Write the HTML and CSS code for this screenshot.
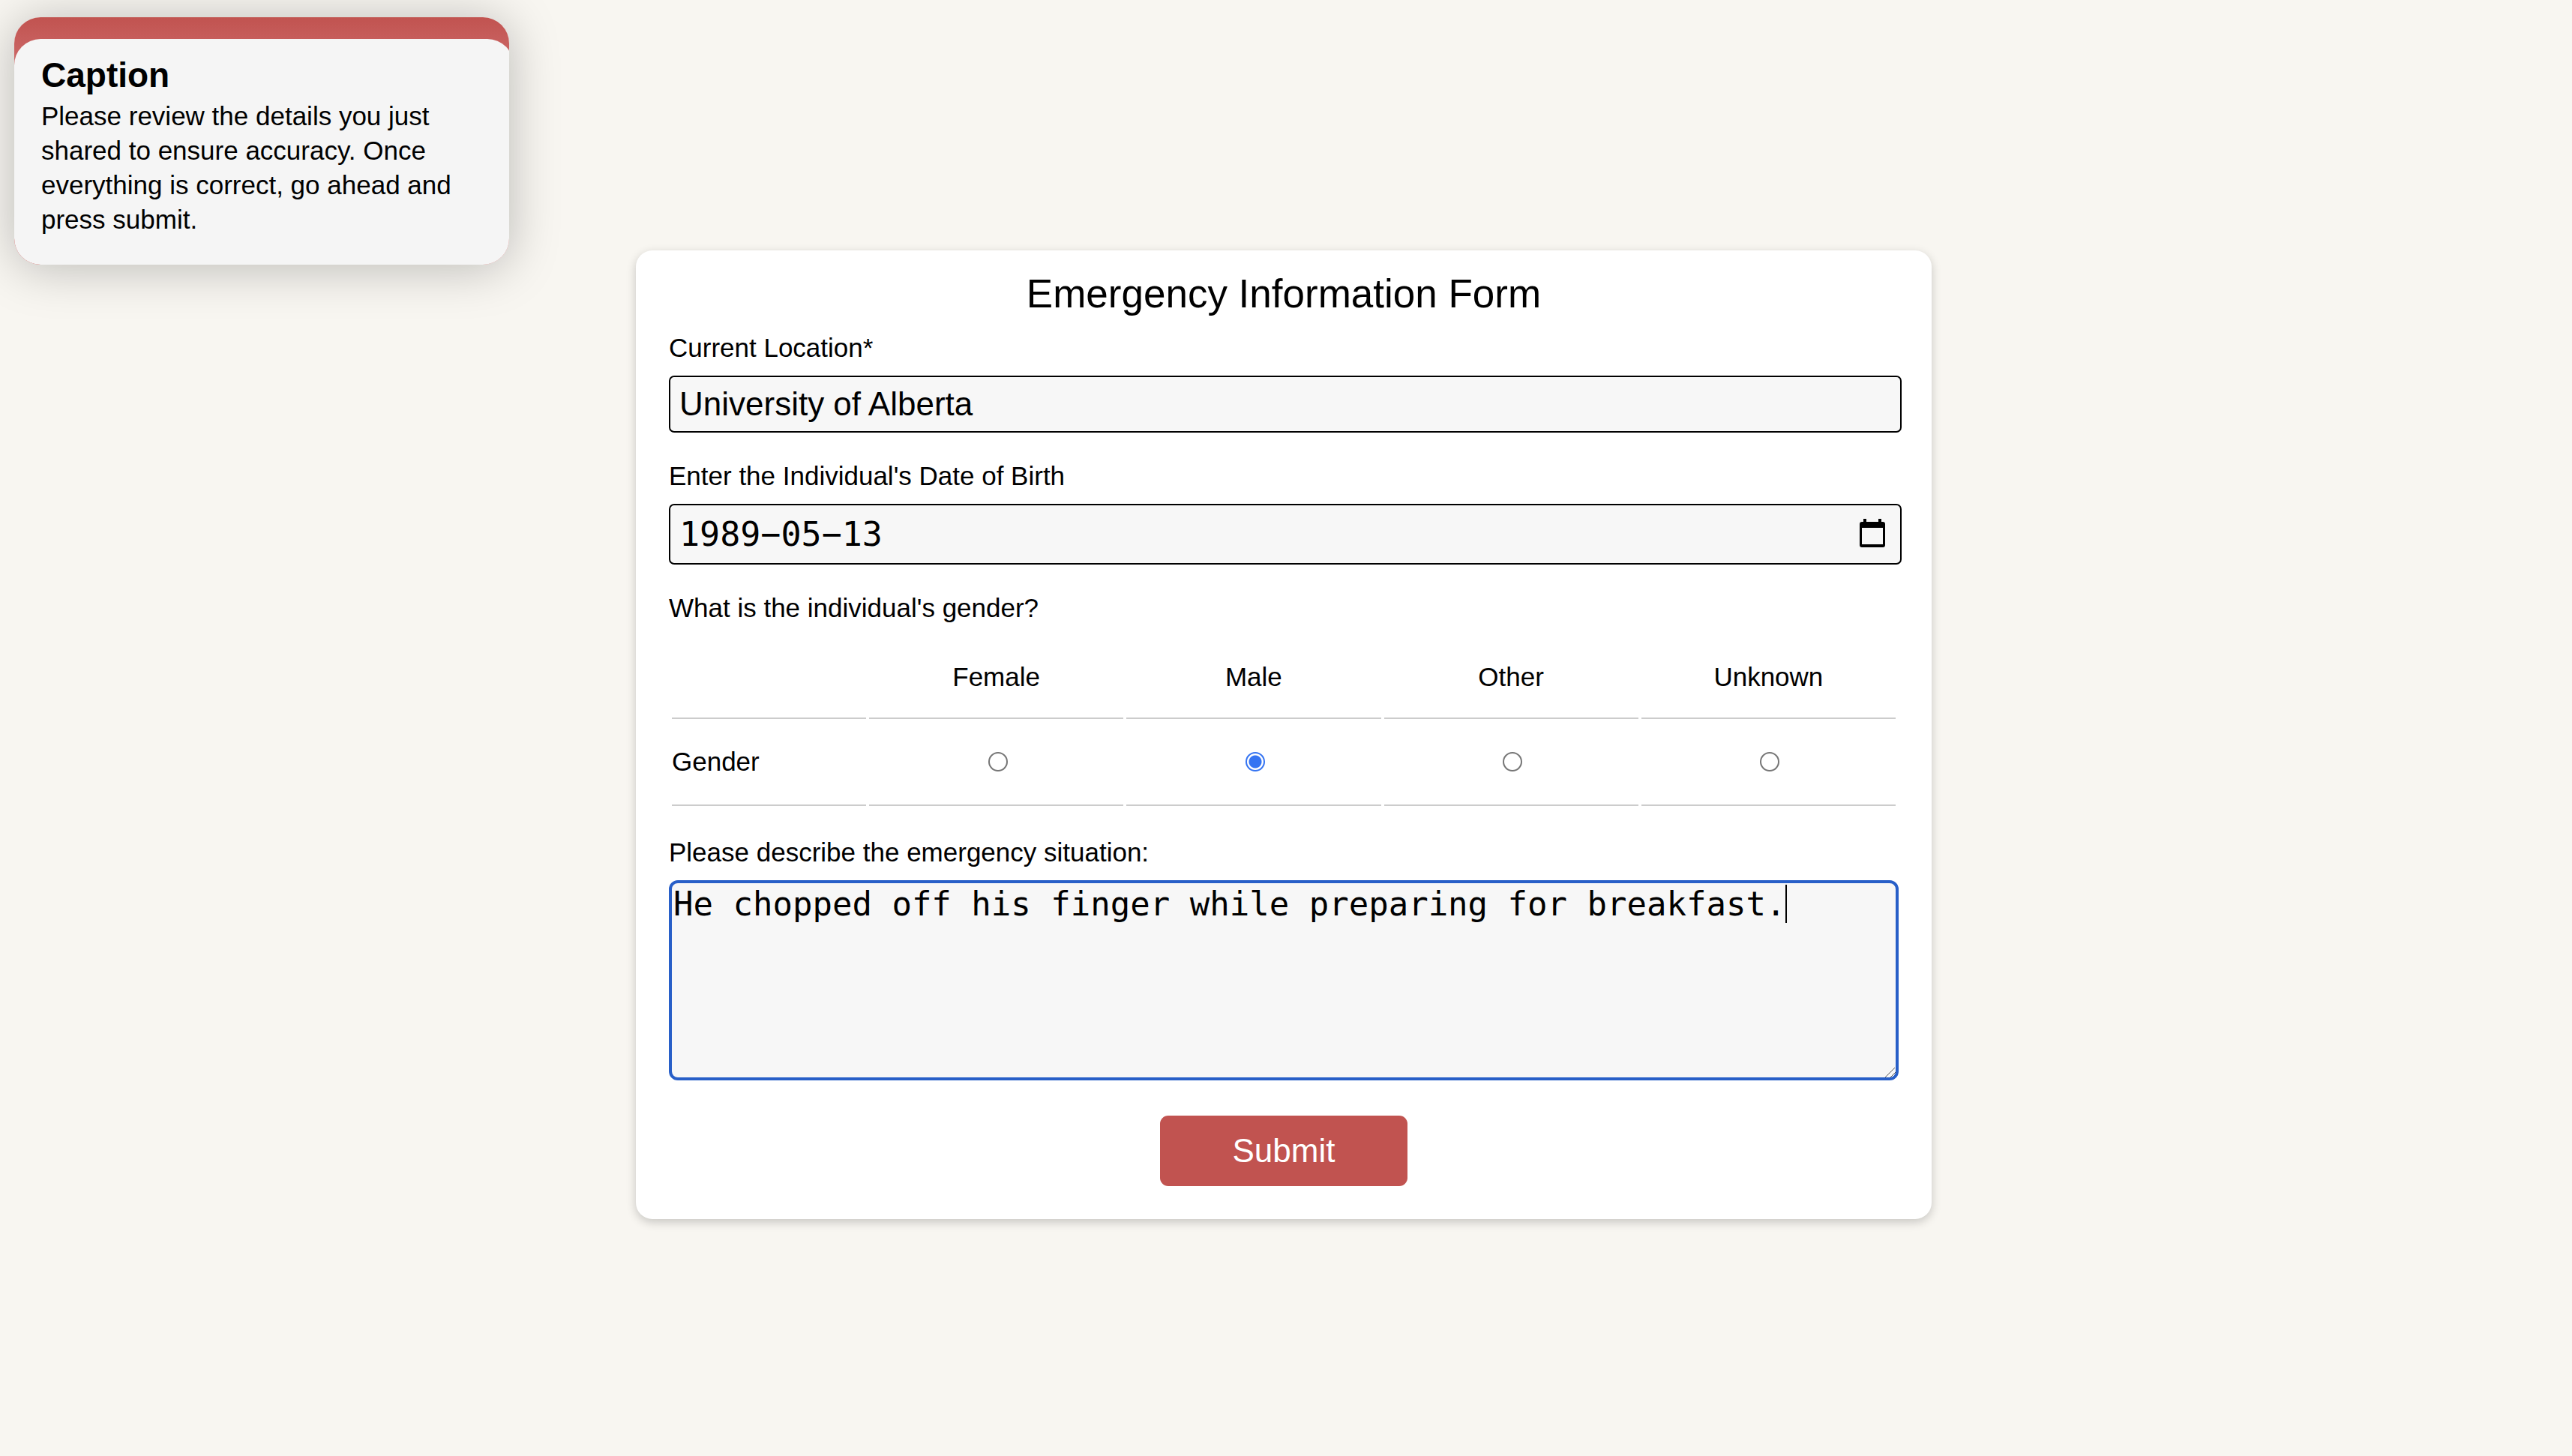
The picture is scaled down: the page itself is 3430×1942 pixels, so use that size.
FILE: index.html
```html
<!DOCTYPE html>
<html lang="en">
<head>
<meta charset="utf-8">
<title>Emergency Information Form</title>
<link rel="stylesheet" href="styles.css">
</head>
<body>
<aside class="caption">
  <div class="caption-body">
    <h2 class="caption-title">Caption</h2>
    <p class="caption-text">Please review the details you just shared to ensure accuracy. Once everything is correct, go ahead and press submit.</p>
  </div>
</aside>
<main class="page">
  <form class="card">
    <h1 class="title">Emergency Information Form</h1>
    <div class="field">
      <label class="label" for="location">Current Location*</label>
      <input class="input" id="location" type="text" value="University of Alberta">
    </div>
    <div class="field">
      <label class="label" for="dob">Enter the Individual's Date of Birth</label>
      <div class="input date">
        <input class="date-input" id="dob" type="text" value="1989−05−13">
        <button class="date-button" type="button" aria-label="Open calendar">
          <svg class="date-icon" viewBox="0 0 34 38" aria-hidden="true">
            <path fill-rule="evenodd" d="M5 0h4v4h16V0h4v4h2a3 3 0 0 1 3 3v28a3 3 0 0 1-3 3H3a3 3 0 0 1-3-3V7a3 3 0 0 1 3-3h2zM3 12v22h28V12z"/>
          </svg>
        </button>
      </div>
    </div>
    <div class="field">
      <span class="label" id="gender-label">What is the individual's gender?</span>
      <table class="grid" aria-labelledby="gender-label">
        <colgroup><col class="col-name"><col><col><col><col></colgroup>
        <thead>
          <tr><td></td><th id="g-female" scope="col">Female</th><th id="g-male" scope="col">Male</th><th id="g-other" scope="col">Other</th><th id="g-unknown" scope="col">Unknown</th></tr>
        </thead>
        <tbody>
          <tr>
            <th class="row-name" scope="row">Gender</th>
            <td><input class="radio" type="radio" name="gender" value="female" aria-labelledby="g-female"></td>
            <td><input class="radio" type="radio" name="gender" value="male" aria-labelledby="g-male" checked></td>
            <td><input class="radio" type="radio" name="gender" value="other" aria-labelledby="g-other"></td>
            <td><input class="radio" type="radio" name="gender" value="unknown" aria-labelledby="g-unknown"></td>
          </tr>
        </tbody>
      </table>
    </div>
    <div class="field">
      <label class="label" for="situation">Please describe the emergency situation:</label>
      <div class="editor">
        <textarea class="textarea" id="situation">He chopped off his finger while preparing for breakfast.</textarea>
        <span class="caret"></span>
        <svg class="grip" viewBox="0 0 14 13" aria-hidden="true"><path d="M0 13 13 0M7 13 14 6"/></svg>
      </div>
    </div>
    <button class="submit" type="submit">Submit</button>
  </form>
</main>
</body>
</html>
```

FILE: styles.css
```css
* {
  box-sizing: border-box;
}

body {
  margin: 0;
  background: #f8f6f1;
  color: #000;
  font: 35px/46px "Liberation Sans", Arial, sans-serif;
}

/* Floating help panel */
.caption {
  position: absolute;
  top: 23px;
  left: 19px;
  width: 660px;
  padding-top: 29px;
  overflow: hidden;
  border-radius: 35px;
  background: linear-gradient(#c15350, #d07070 80px);
  box-shadow: 0 4px 66px rgba(0, 0, 0, 0.25);
}

.caption-body {
  margin-right: -6px;
  padding: 22px 36px 37px;
  border-radius: 35px;
  background: #f5f5f5;
}

.caption-title {
  margin: 0 0 6px;
  font-size: 46px;
  line-height: 52px;
}

.caption-text {
  margin: 0;
}

/* Form card */
.page {
  padding: 334px 6px 44px 0;
}

.card {
  display: flex;
  flex-direction: column;
  max-width: 1728px;
  margin: 0 auto;
  padding: 28px 44px 44px;
  border-radius: 22px;
  background: #fff;
  box-shadow: 0 4px 13px rgba(0, 0, 0, 0.2);
}

.title {
  margin: 0 0 19px;
  font-size: 53px;
  font-weight: 400;
  line-height: 60px;
  text-align: center;
}

.field {
  display: flex;
  flex-direction: column;
  gap: 14px;
  margin-bottom: 35px;
}

.input {
  height: 76px;
  margin-right: -4px;
  padding: 0 12px;
  border: 2px solid #000;
  border-radius: 7px;
  background: #f7f7f7;
  color: #000;
  font: 44px "Liberation Sans", Arial, sans-serif;
}

.date {
  display: flex;
  align-items: center;
  height: 81px;
  padding-right: 20px;
}

.date-input {
  flex: 1;
  min-width: 0;
  padding: 0;
  border: 0;
  background: none;
  font: 45px "DejaVu Sans Mono", monospace;
}

.date-button {
  display: flex;
  padding: 0 0 4px;
  border: 0;
  background: none;
}

.date-icon {
  width: 34px;
  height: 38px;
}

/* Gender choices */
.grid {
  width: 100%;
  table-layout: fixed;
  border-spacing: 4px;
}

.col-name {
  width: 259px;
}

.grid th,
.grid td {
  height: 112px;
  padding: 0 0 4px;
  border-bottom: 2px solid #ccc;
  font-weight: 400;
  text-align: center;
  vertical-align: middle;
}

.grid thead th,
.grid thead td {
  height: 107px;
}

.grid tbody td {
  padding-left: 4px;
}

.grid .row-name {
  text-align: left;
}

.radio {
  display: block;
  appearance: none;
  width: 26px;
  height: 26px;
  margin: 0 auto;
  border: 2px solid #767676;
  border-radius: 50%;
  background: #fff;
}

.radio:checked {
  border-color: #3574f2;
  background: radial-gradient(#3574f2 8px, #fff 9px);
}

/* Situation editor */
.editor {
  position: relative;
  display: flex;
  font: 44px/51px "DejaVu Sans Mono", monospace;
}

.textarea {
  width: 100%;
  height: 267px;
  padding: 2px;
  border: 4px solid #285fc8;
  border-radius: 12px;
  outline: none;
  background: #f7f7f7;
  color: #000;
  font: inherit;
  resize: none;
}

.caret {
  position: absolute;
  top: 6px;
  left: calc(6px + 56ch);
  width: 2px;
  height: 51px;
  background: #000;
}

.grip {
  position: absolute;
  right: 4px;
  bottom: 4px;
  width: 14px;
  height: 13px;
  fill: none;
  stroke: #555;
}

.submit {
  align-self: center;
  width: 330px;
  height: 94px;
  margin-top: 12px;
  padding: 0;
  border: 0;
  border-radius: 11px;
  background: #c15350;
  color: #fff;
  font: 44px "Liberation Sans", Arial, sans-serif;
}
```
